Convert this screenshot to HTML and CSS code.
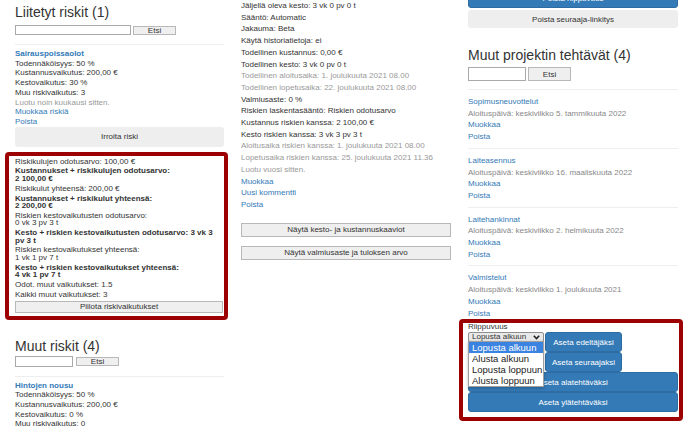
FILE: index.html
```html
<!DOCTYPE html>
<html lang="fi">
<head>
  <meta charset="UTF-8">
  <meta name="viewport" content="width=device-width, initial-scale=1.0">
  <title>Tehtävän tiedot</title>

  <link rel="stylesheet" href="styles.css">
</head>
<body>
<div class="page">

  <div class="column risks">
    <h2>Liitetyt riskit (1)</h2>
    <div class="search">
      <input class="search-input wide" type="text">
      <button class="search-button">Etsi</button>
    </div>

    <div class="risk">
      <a class="risk-name" href="#">Sairauspoissaolot</a>
      <div>Todennäköisyys: 50 %</div>
      <div>Kustannusvaikutus: 200,00 €</div>
      <div>Kestovaikutus: 30 %</div>
      <div>Muu riskivaikutus: 3</div>
      <div class="muted">Luotu noin kuukausi sitten.</div>
      <a href="#">Muokkaa riskiä</a>
      <a href="#">Poista</a>
    </div>
    <button class="flat-button">Irroita riski</button>

    <div class="highlight impacts">
      <p>Riskikulujen odotusarvo: 100,00 €</p>
      <p class="strong">Kustannukset + riskikulujen odotusarvo:<br>2 100,00 €</p>
      <p>Riskikulut yhteensä: 200,00 €</p>
      <p class="strong">Kustannukset + riskikulut yhteensä:<br>2 200,00 €</p>
      <p>Riskien kestovaikutusten odotusarvo:<br>0 vk 3 pv 3 t</p>
      <p class="strong">Kesto + riskien kestovaikutusten odotusarvo: 3 vk 3 pv 3 t</p>
      <p>Riskien kestovaikutukset yhteensä:<br>1 vk 1 pv 7 t</p>
      <p class="strong">Kesto + riskien kestovaikutukset yhteensä:<br>4 vk 1 pv 7 t</p>
      <p>Odot. muut vaikutukset: 1.5</p>
      <p>Kaikki muut vaikutukset: 3</p>
      <button class="outline-button">Piilota riskivaikutukset</button>
    </div>

    <h2 class="next-heading">Muut riskit (4)</h2>
    <div class="search tight">
      <input class="search-input" type="text">
      <button class="search-button">Etsi</button>
    </div>

    <div class="risk">
      <a class="risk-name" href="#">Hintojen nousu</a>
      <div>Todennäköisyys: 50 %</div>
      <div>Kustannusvaikutus: 200,00 €</div>
      <div>Kestovaikutus: 0 %</div>
      <div>Muu riskivaikutus: 0</div>
    </div>
  </div>

  <div class="column details">
    <div>Jäljellä oleva kesto: 3 vk 0 pv 0 t</div>
    <div>Sääntö: Automatic</div>
    <div>Jakauma: Beta</div>
    <div>Käytä historiatietoja: ei</div>
    <div>Todellinen kustannus: 0,00 €</div>
    <div>Todellinen kesto: 3 vk 0 pv 0 t</div>
    <div class="muted">Todellinen aloitusaika: 1. joulukuuta 2021 08.00</div>
    <div class="muted">Todellinen lopetusaika: 22. joulukuuta 2021 08.00</div>
    <div>Valmiusaste: 0 %</div>
    <div>Riskien laskentasääntö: Riskien odotusarvo</div>
    <div>Kustannus riskien kanssa: 2 100,00 €</div>
    <div>Kesto riskien kanssa: 3 vk 3 pv 3 t</div>
    <div class="muted">Aloitusaika riskien kanssa: 1. joulukuuta 2021 08.00</div>
    <div class="muted">Lopetusaika riskien kanssa: 25. joulukuuta 2021 11.36</div>
    <div class="muted">Luotu vuosi sitten.</div>
    <a href="#">Muokkaa</a>
    <a href="#">Uusi kommentti</a>
    <a href="#">Poista</a>

    <button class="outline-button chart-button">Näytä kesto- ja kustannuskaaviot</button>
    <button class="outline-button chart-button second">Näytä valmiusaste ja tuloksen arvo</button>
  </div>

  <div class="column others">
    <button class="blue-button cut">Poista riippuvuus</button>
    <button class="flat-button unlink">Poista seuraaja-linkitys</button>

    <h2 class="tasks-heading">Muut projektin tehtävät (4)</h2>
    <div class="search big">
      <input class="search-input" type="text">
      <button class="search-button">Etsi</button>
    </div>

    <div class="tasks">
      <div class="task">
        <a href="#">Sopimusneuvottelut</a>
        <div class="date">Aloituspäivä: keskiviikko 5. tammikuuta 2022</div>
        <a href="#">Muokkaa</a>
        <a href="#">Poista</a>
      </div>
      <div class="task">
        <a href="#">Laiteasennus</a>
        <div class="date">Aloituspäivä: keskiviikko 16. maaliskuuta 2022</div>
        <a href="#">Muokkaa</a>
        <a href="#">Poista</a>
      </div>
      <div class="task">
        <a href="#">Laitehankinnat</a>
        <div class="date">Aloituspäivä: keskiviikko 2. helmikuuta 2022</div>
        <a href="#">Muokkaa</a>
        <a href="#">Poista</a>
      </div>
      <div class="task">
        <a href="#">Valmistelut</a>
        <div class="date">Aloituspäivä: keskiviikko 1. joulukuuta 2021</div>
        <a href="#">Muokkaa</a>
        <a href="#">Poista</a>
      </div>
    </div>

    <div class="highlight dependency">
      <div class="dep-label">Riippuvuus</div>
      <div class="dep-grid">
        <div class="select">
          <span>Lopusta alkuun</span>
          <svg class="chevron" width="7" height="5" viewBox="0 0 7 5">
            <polyline points="0.8,0.8 3.5,3.6 6.2,0.8" fill="none" stroke="#222" stroke-width="1.6"/>
          </svg>
          <ul class="select-menu">
            <li class="active">Lopusta alkuun</li>
            <li>Alusta alkuun</li>
            <li>Lopusta loppuun</li>
            <li>Alusta loppuun</li>
          </ul>
        </div>
        <button class="blue-button">Aseta edeltäjäksi</button>
        <button class="blue-button follow">Aseta seuraajaksi</button>
      </div>
      <button class="blue-button">Aseta alatehtäväksi</button>
      <button class="blue-button">Aseta ylätehtäväksi</button>
    </div>
  </div>

</div>
</body>
</html>
```

FILE: styles.css
```css
html, body {
  overflow: hidden;
}
body {
  margin: 0;
  font-family: "Liberation Sans", Arial, sans-serif;
  font-size: 8px;
  color: #333;
  background: #fff;
}
* {
  box-sizing: border-box;
}
a {
  display: block;
  color: #337ab7;
  text-decoration: none;
}
button {
  font: inherit;
  color: #333;
  padding: 0;
  cursor: pointer;
}
h2 {
  margin: 0;
  font-size: 14px;
  font-weight: normal;
  line-height: 16px;
}
.muted {
  color: #999;
}

.page {
  display: grid;
  grid-template-columns: 209px 210px 210px;
  column-gap: 17px;
  align-items: start;
  padding-left: 15px;
}

/* search row */
.search {
  display: flex;
  align-items: center;
  gap: 2px;
  margin-top: 5px;
}
.search.tight {
  gap: 3px;
  margin-top: 2px;
}
.search.big {
  margin-top: 4px;
}
.search-input {
  width: 58px;
  height: 11px;
  border: 1px solid #a9a9a9;
  padding: 0 2px;
  background: #fff;
}
.search-input.wide {
  width: 116px;
  height: 10px;
}
.search-button {
  width: 43px;
  height: 9px;
  line-height: 7px;
  border: 1px solid #b8b8b8;
  background: #efefef;
}
.search.big .search-input,
.search.big .search-button {
  height: 14px;
}

/* buttons */
.flat-button {
  display: block;
  width: 100%;
  height: 20px;
  border: 0;
  border-radius: 3px;
  background: #eee;
}
.outline-button {
  display: block;
  width: 100%;
  height: 12px;
  border: 1px solid #b8b8b8;
  background: #efefef;
}
.blue-button {
  display: block;
  width: 100%;
  height: 20px;
  border: 1px solid #2e6da4;
  border-radius: 3px;
  background: #337ab7;
  color: #fff;
}
.highlight {
  border: 4px solid #9c0000;
  border-radius: 4px;
}

/* left column */
.risks h2 {
  padding-top: 4px;
}
.risks h2.next-heading {
  margin-top: 14px;
}
.risk {
  margin-top: 9px;
  padding-top: 4px;
  border-top: 1px solid #eee;
  line-height: 9.7px;
}
.risk-name {
  font-weight: bold;
}
.impacts {
  margin: 5px -4px 0 -10px;
  padding: 2px 1px 3px 6px;
}
.impacts p {
  margin: 0 0 2.3px;
  line-height: 7.5px;
}
.impacts p.strong {
  font-weight: bold;
}
.impacts .outline-button {
  margin-top: 1px;
}

/* middle column */
.details {
  line-height: 11.7px;
}
.chart-button {
  height: 14px;
  margin-top: 12px;
}
.chart-button.second {
  margin-top: 9px;
}

/* right column */
.blue-button.cut {
  margin-top: -12px;
}
.flat-button.unlink {
  height: 18px;
  margin-top: 2px;
}
.tasks-heading {
  margin-top: 19px;
}
.tasks {
  margin-top: 8px;
}
.task {
  border-top: 1px solid #eee;
  padding: 6px 0 5px;
  line-height: 11.7px;
}
.task:last-child {
  padding-bottom: 0;
}
.task .date {
  color: #888;
}

.dependency {
  margin: 0 -5px 0 -9px;
  padding: 0 1px 5px 5px;
}
.dep-label {
  line-height: 8px;
}
.dep-grid {
  display: grid;
  grid-template-columns: 76px 77px;
  grid-template-rows: 20px 20px;
  column-gap: 1px;
  margin-top: 1px;
}
.dep-grid .blue-button {
  grid-column: 2;
}
.select {
  position: relative;
  z-index: 2;
  grid-column: 1;
  grid-row: 1;
  align-self: start;
  display: flex;
  align-items: center;
  justify-content: space-between;
  height: 10px;
  padding: 0 3px 0 3px;
  border: 1px solid #8f8f8f;
  border-radius: 2px;
  background: #e9e9e9;
  line-height: 8px;
  white-space: nowrap;
}
.select-menu {
  position: absolute;
  top: 100%;
  left: -1px;
  right: -1px;
  margin: 0;
  padding: 0;
  list-style: none;
  border: 1px solid #a0a0a0;
  background: #fff;
  box-shadow: 0 1px 3px rgba(0, 0, 0, 0.25);
  font-size: 9.5px;
  line-height: 11px;
  color: #222;
  white-space: nowrap;
}
.select-menu li {
  padding-left: 3px;
}
.select-menu li.active {
  background: #3b83e0;
  color: #fff;
}
```
